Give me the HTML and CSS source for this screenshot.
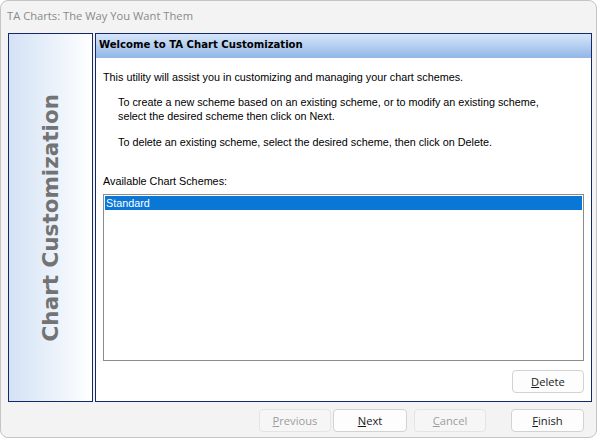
FILE: index.html
```html
<!DOCTYPE html>
<html>
<head>
<meta charset="utf-8">
<link rel="stylesheet" href="styles.css">
</head>
<body>
<div class="window">
  <div class="titlebar">TA Charts: The Way You Want Them</div>
  <div class="content">
    <div class="sidebar"><span class="side-title">Chart Customization</span></div>
    <div class="main">
      <div class="header">Welcome to TA Chart Customization</div>
      <div class="body">
        <p class="intro">This utility will assist you in customizing and managing your chart schemes.</p>
        <p class="indent">To create a new scheme based on an existing scheme, or to modify an existing scheme,<br>select the desired scheme then click on Next.</p>
        <p class="indent second">To delete an existing scheme, select the desired scheme, then click on Delete.</p>
        <p class="label">Available Chart Schemes:</p>
        <div class="listbox">
          <div class="item selected">Standard</div>
        </div>
        <div class="delete-row">
          <button class="btn"><u>D</u>elete</button>
        </div>
      </div>
    </div>
  </div>
  <div class="footer">
    <button class="btn disabled prev"><u>P</u>revious</button>
    <button class="btn next"><u>N</u>ext</button>
    <button class="btn disabled cancel"><u>C</u>ancel</button>
    <button class="btn finish"><u>F</u>inish</button>
  </div>
</div>
</body>
</html>
```
FILE: styles.css
```css
html, body {
  margin: 0;
  padding: 0;
  background: #ffffff;
}
.window {
  box-sizing: border-box;
  width: 597px;
  height: 438px;
  border: 1px solid #c4c4c4;
  border-radius: 8px;
  background: #f3f3f3;
  display: flex;
  flex-direction: column;
  overflow: hidden;
}
.titlebar {
  height: 32px;
  box-sizing: border-box;
  padding: 7px 0 0 6px;
  font-family: "Open Sans", sans-serif;
  font-size: 11.2px;
  color: #8a8a8a;
}
.content {
  display: flex;
  gap: 2px;
  height: 369px;
  padding: 0 4px 0 7px;
}
.sidebar {
  box-sizing: border-box;
  width: 85px;
  border: 1px solid #14286c;
  background: linear-gradient(to right, #d3e2f5, #ffffff);
  display: flex;
  align-items: center;
  justify-content: center;
}
.side-title {
  writing-mode: vertical-rl;
  transform: rotate(180deg);
  font-family: "DejaVu Sans", sans-serif;
  font-weight: bold;
  font-size: 21.5px;
  color: #737373;
  white-space: nowrap;
}
.main {
  flex: 1;
  box-sizing: border-box;
  border: 1px solid #14286c;
  background: #ffffff;
  display: flex;
  flex-direction: column;
}
.header {
  height: 24px;
  box-sizing: border-box;
  padding: 5px 0 0 3px;
  background: linear-gradient(to bottom, #d6e6fa, #92b6e6);
  font-family: "DejaVu Sans", sans-serif;
  font-weight: bold;
  font-size: 10.1px;
  color: #000;
}
.body {
  flex: 1;
  display: flex;
  flex-direction: column;
  padding: 12px 7px 7px 7px;
  font-family: "Liberation Sans", sans-serif;
  font-size: 10.8px;
  color: #000;
}
.body p {
  margin: 0;
  line-height: 14px;
}
.indent {
  padding-left: 15px;
  margin-top: 11px !important;
}
.indent.second {
  margin-top: 12px !important;
}
.label {
  margin-top: 25px !important;
}
.listbox {
  margin-top: 6px;
  height: 167px;
  box-sizing: border-box;
  border: 1px solid #8c8c8c;
  padding: 1px;
}
.item {
  height: 14px;
  line-height: 14px;
  padding-left: 1px;
}
.item.selected {
  background: #0a76d6;
  color: #fff;
}
.delete-row {
  display: flex;
  justify-content: flex-end;
  margin-top: 9px;
}
.btn {
  box-sizing: border-box;
  width: 72px;
  height: 23px;
  border: 1px solid #d2d2d2;
  border-radius: 4px;
  background: #fdfdfd;
  font-family: "Open Sans", sans-serif;
  font-size: 11.2px;
  color: #1a1a1a;
  padding: 0;
}
.btn.disabled {
  background: #f6f6f6;
  border-color: #e4e4e4;
  color: #9d9d9d;
}
.footer {
  display: flex;
  padding: 7px 0 0 258px;
}
.btn.next {
  width: 74px;
  margin-left: 2px;
}
.btn.cancel {
  margin-left: 7px;
}
.btn.finish {
  width: 73px;
  margin-left: 25px;
}
```
